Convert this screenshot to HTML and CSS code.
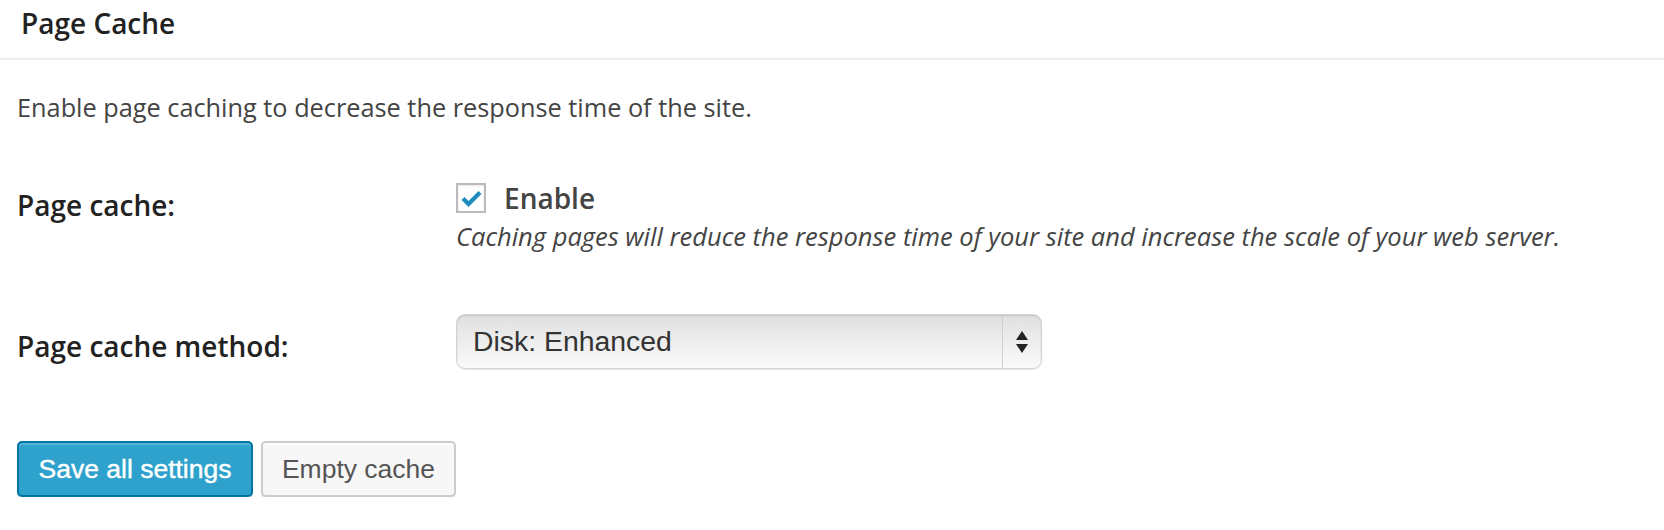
FILE: index.html
```html
<!DOCTYPE html>
<html>
<head>
<meta charset="utf-8">
<link rel="stylesheet" href="styles.css">
</head>
<body>
<div class="box">
  <div class="box-head"><h3 class="title">Page Cache</h3></div>
  <p class="intro">Enable page caching to decrease the response time of the site.</p>
  <div class="form">
    <div class="label label-first">Page cache:</div>
    <div class="field">
      <div class="check-row">
        <span class="checkbox">
          <svg width="21" height="17" viewBox="0 0 21 17"><path d="M2 8.5 L7.5 14 L19 2.5" fill="none" stroke="#1e8cbe" stroke-width="4.2" stroke-linecap="butt" stroke-linejoin="miter"/></svg>
        </span>
        <span class="check-label">Enable</span>
      </div>
      <div class="desc">Caching pages will reduce the response time of your site and increase the scale of your web server.</div>
    </div>
    <div class="label label-second">Page cache method:</div>
    <div class="field field-second">
      <div class="select">
        <span class="select-text">Disk: Enhanced</span>
        <span class="select-arrows">
          <svg width="12" height="22" viewBox="0 0 12 22"><path d="M6 0 L12 9 L0 9 Z" fill="#222"/><path d="M0 13 L12 13 L6 22 Z" fill="#222"/></svg>
        </span>
      </div>
    </div>
  </div>
  <div class="actions">
    <button class="btn btn-primary">Save all settings</button>
    <button class="btn btn-secondary">Empty cache</button>
  </div>
</div>
</body>
</html>
```
FILE: styles.css
```css
html, body {
  margin: 0;
  padding: 0;
  background: #fff;
}
body {
  font-family: "Open Sans", "DejaVu Sans", sans-serif;
  color: #444;
}
.box-head {
  border-bottom: 2px solid #eeeeee;
  padding: 5px 0 17px 21px;
}
.title {
  margin: 0;
  font-size: 28px;
  font-weight: 600;
  line-height: 36px;
  color: #222;
}
.intro {
  margin: 29px 0 0 17px;
  font-size: 25.3px;
  line-height: 36px;
  color: #444;
}
.form {
  display: grid;
  grid-template-columns: 439px 1fr;
  padding-left: 17px;
  margin-top: 58px;
}
.label {
  font-size: 28px;
  font-weight: 600;
  line-height: 30px;
  color: #222;
}
.label-first {
  padding-top: 7px;
}
.label-second {
  padding-top: 79px;
}
.field-second {
  padding-top: 62px;
}
.check-row {
  display: flex;
  align-items: center;
  height: 30px;
}
.checkbox {
  box-sizing: border-box;
  width: 30px;
  height: 30px;
  border: 2px solid #bbbbbb;
  background: #fff;
  box-shadow: inset 0 1px 2px rgba(0,0,0,0.1);
  display: flex;
  align-items: center;
  justify-content: center;
}
.checkbox svg {
  display: block;
  margin-top: 1px;
}
.check-label {
  margin-left: 18px;
  font-size: 28px;
  font-weight: 600;
  color: #444;
  line-height: 30px;
}
.desc {
  margin-top: 7px;
  font-size: 25.5px;
  font-style: italic;
  line-height: 32px;
  color: #444;
}
.select {
  box-sizing: border-box;
  width: 586px;
  height: 55px;
  border-radius: 9px;
  border: 1px solid #d3d3d3;
  background: linear-gradient(to bottom, #e0e0e0 0%, #ececec 45%, #fafafa 100%);
  box-shadow: inset 0 1px 2px rgba(0,0,0,0.12), 0 1px 1px rgba(0,0,0,0.08);
  display: flex;
  align-items: center;
}
.select-text {
  flex: 1;
  padding-left: 16px;
  font-family: "Liberation Sans", Arial, sans-serif;
  font-size: 28.4px;
  color: #333;
}
.select-arrows {
  width: 38px;
  height: 100%;
  border-left: 1px solid #d0d0d0;
  display: flex;
  align-items: center;
  justify-content: center;
}
.select-arrows svg { display: block; }
.actions {
  display: flex;
  gap: 8px;
  padding-left: 17px;
  margin-top: 72px;
}
.btn {
  box-sizing: border-box;
  height: 56px;
  border-radius: 5px;
  font-family: "Liberation Sans", Arial, sans-serif;
  font-size: 26.5px;
  padding: 0;
  cursor: pointer;
}
.btn-primary {
  width: 236px;
  background: #2ea2cc;
  border: 2px solid #0074a2;
  color: #fff;
  box-shadow: inset 0 2px 0 rgba(120,200,230,0.5), 0 2px 0 rgba(0,0,0,0.15);
  -webkit-text-stroke: 0.4px #fff;
}
.btn-secondary {
  width: 195px;
  background: #f7f7f7;
  border: 2px solid #cccccc;
  color: #555;
  box-shadow: inset 0 2px 0 #fff, 0 2px 0 rgba(0,0,0,0.08);
}
```
